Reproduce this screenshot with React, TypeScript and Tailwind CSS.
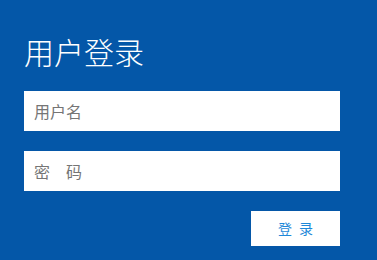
export default function App() {
  return (
    <div
      className="w-[377px] h-[260px] bg-[#0457a8] px-6 pt-[33px]"
      style={{ fontFamily: '"Noto Sans CJK SC", "Noto Sans", sans-serif' }}
    >
      <h1 className="text-[30px] leading-[36px] text-white font-light">用户登录</h1>
      <form className="mt-[22px] flex flex-col gap-5 w-[316px]">
        <input
          type="text"
          placeholder="用户名"
          className="h-10 bg-white px-[10px] text-[16px] text-[#333] placeholder:text-[#757575] outline-none"
        />
        <input
          type="password"
          placeholder="密　码"
          className="h-10 bg-white px-[10px] text-[16px] text-[#333] placeholder:text-[#757575] outline-none"
        />
        <div className="flex justify-end">
          <button
            type="button"
            className="w-[89px] h-[35px] bg-white text-[14px] text-[#1e88d8] tracking-[7px] pl-[7px]"
          >
            登录
          </button>
        </div>
      </form>
    </div>
  );
}
